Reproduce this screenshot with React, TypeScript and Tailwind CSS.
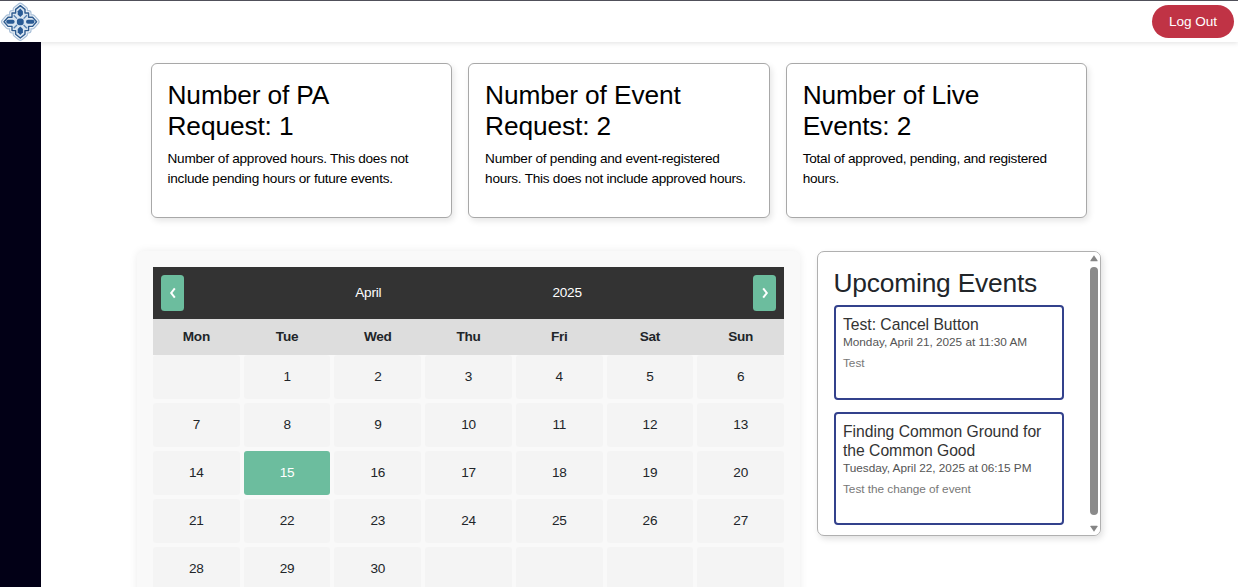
const stats = [
  {
    title: "Number of PA Request: 1",
    text: "Number of approved hours. This does not include pending hours or future events.",
  },
  {
    title: "Number of Event Request: 2",
    text: "Number of pending and event-registered hours. This does not include approved hours.",
  },
  {
    title: "Number of Live Events: 2",
    text: "Total of approved, pending, and registered hours.",
  },
];

const events = [
  {
    title: "Test: Cancel Button",
    date: "Monday, April 21, 2025 at 11:30 AM",
    text: "Test",
    height: "h-[95px]",
  },
  {
    title: "Finding Common Ground for the Common Good",
    date: "Tuesday, April 22, 2025 at 06:15 PM",
    text: "Test the change of event",
    height: "h-[113px]",
  },
];

const weekdays = ["Mon", "Tue", "Wed", "Thu", "Fri", "Sat", "Sun"];
const TODAY = 15;
const days = Array.from({ length: 35 }, (_, i) => (i >= 1 && i <= 30 ? i : null));

function Logo() {
  const outline =
    "M20.3 4.6 L25 8.4 V12 H28.6 V16.2 H32.6 L36.6 20.8 L32.6 25.4 H28.6 V29.6 H25 V33.2 L20.3 37 L15.6 33.2 V29.6 H12 V25.4 H8 L4 20.8 L8 16.2 H12 V12 H15.6 V8.4 Z";
  return (
    <svg viewBox="0 0 40 41" className="h-[41px] w-10" strokeLinejoin="round" aria-hidden="true">
      <path d={outline} fill="#a9c0d9" stroke="#a9c0d9" strokeWidth="6" />
      <path d={outline} fill="#f2f6fa" stroke="#f2f6fa" strokeWidth="3.6" />
      <path d={outline} fill="#d9e5f1" stroke="#2f5c90" strokeWidth="1.4" />
      <g fill="#2a5b95">
        <path d="M20.3 7.4 L22.9 10.2 V13.4 L20.3 16 L17.7 13.4 V10.2 Z" />
        <path d="M20.3 34 L22.9 31.2 V28 L20.3 25.4 L17.7 28 V31.2 Z" />
        <rect x="6.2" y="18.8" width="8.4" height="4" rx="2" />
        <rect x="26" y="18.8" width="8.4" height="4" rx="2" />
        <rect x="16.9" y="17.4" width="6.8" height="6.8" rx="2.6" />
      </g>
      <path
        d="M13.7 14.3 L17 17.6 M26.9 14.3 L23.6 17.6 M13.7 27.3 L17 24 M26.9 27.3 L23.6 24"
        stroke="#5580b0"
        strokeWidth="1.3"
      />
    </svg>
  );
}

function MonthButton({ label, path }: { label: string; path: string }) {
  return (
    <button
      aria-label={label}
      className="flex h-9 w-[23px] items-center justify-center rounded-[3.5px] bg-[#6cbd9e]"
    >
      <svg viewBox="0 0 8 12" className="h-3 w-2" fill="none" stroke="#fff" strokeWidth="2">
        <path d={path} />
      </svg>
    </button>
  );
}

function Calendar() {
  return (
    <section className="h-[370px] w-[663px] rounded-[7px] bg-[#f9f9f9] px-4 pt-4 shadow-[0_0_8px_rgba(0,0,0,0.08)]">
      <div className="flex h-[52px] items-center justify-between bg-[#333] px-2 text-white">
        <MonthButton label="Previous month" path="M5.8 1.3 L2.2 6 L5.8 10.7" />
        <span>April</span>
        <span>2025</span>
        <MonthButton label="Next month" path="M2.2 1.3 L5.8 6 L2.2 10.7" />
      </div>
      <div className="grid h-9 grid-cols-7 items-center gap-x-1 bg-[#ddd] text-center font-bold">
        {weekdays.map((d) => (
          <span key={d}>{d}</span>
        ))}
      </div>
      <div className="grid grid-cols-7 gap-1">
        {days.map((d, i) => (
          <div
            key={i}
            className={
              d === TODAY
                ? "flex h-11 items-center justify-center rounded-[3px] bg-[#6cbd9e] text-white"
                : "flex h-11 items-center justify-center rounded-[3px] bg-[#f4f4f4]"
            }
          >
            {d}
          </div>
        ))}
      </div>
    </section>
  );
}

function Scrollbar() {
  return (
    <div className="flex w-3 shrink-0 flex-col items-center bg-white pt-[3px] pb-[3px]">
      <svg viewBox="0 0 8 7" className="h-[7px] w-2" fill="#858585">
        <path d="M4 0.3 L7.6 5.4 Q7.8 6.3 7 6.3 H1 Q0.2 6.3 0.4 5.4 Z" />
      </svg>
      <div className="mt-[4.5px] mb-[10px] w-[7.5px] flex-1 rounded-full bg-[#8a8a8a]" />
      <svg viewBox="0 0 8 7" className="h-[7px] w-2" fill="#858585">
        <path d="M4 6.7 L7.6 1.6 Q7.8 0.7 7 0.7 H1 Q0.2 0.7 0.4 1.6 Z" />
      </svg>
    </div>
  );
}

function UpcomingEvents() {
  return (
    <section className="flex h-[285px] w-[284.5px] overflow-hidden rounded-[7px] border border-[#b0b0b0] bg-white shadow-[2px_3px_6px_rgba(0,0,0,0.12)]">
      <div className="flex-1 pt-4 pl-4">
        <h2 className="text-[26.4px] leading-[31.7px] tracking-[-0.22px]">Upcoming Events</h2>
        <div className="mt-[5.5px] flex w-[230.4px] flex-col gap-3">
          {events.map((e) => (
            <article
              key={e.title}
              className={`${e.height} rounded-[4px] border-2 border-[#33418c] px-[7.5px] pt-[8.5px]`}
            >
              <h3 className="text-[15.7px] leading-[18.8px] tracking-[-0.02px] text-[#333]">{e.title}</h3>
              <p className="-mt-[0.5px] text-[11.8px] leading-[17.2px] tracking-[-0.03px] text-[#555]">
                {e.date}
              </p>
              <p className="mt-1 text-[11.8px] leading-[17.2px] tracking-[-0.03px] text-[#777]">{e.text}</p>
            </article>
          ))}
        </div>
      </div>
      <Scrollbar />
    </section>
  );
}

export default function App() {
  return (
    <div className="flex h-[587px] w-[1238px] flex-col overflow-hidden bg-white font-['Liberation_Sans',Arial,sans-serif] text-[13.6px] leading-[19.8px] tracking-[-0.25px] text-[#212529]">
      <header className="z-10 flex h-[41.5px] shrink-0 items-center justify-between border-t border-[#50505a] bg-white pr-1 shadow-[0_1px_5px_rgba(0,0,0,0.12)]">
        <Logo />
        <button className="h-[33px] w-[82px] rounded-full bg-[#c03345] pt-px tracking-[-0.08px] text-white">
          Log Out
        </button>
      </header>
      <div className="flex min-h-0 flex-1">
        <aside className="z-20 w-[41px] shrink-0 bg-[#020016]" />
        <main className="flex-1 pt-[21.5px]">
          <div className="ml-[109.5px] flex gap-4">
            {stats.map((s) => (
              <article
                key={s.title}
                className="h-[155px] w-[301.6px] rounded-[6px] border border-[#a8a8a8] bg-white px-4 pt-4 text-black shadow-[2px_3px_6px_rgba(0,0,0,0.1)]"
              >
                <h2 className="w-[220px] text-[26.3px] leading-[31.4px] tracking-[-0.12px]">{s.title}</h2>
                <p className="mt-[6.5px]">{s.text}</p>
              </article>
            ))}
          </div>
          <div className="mt-[33px] ml-[96px] flex items-start gap-[16.5px]">
            <Calendar />
            <UpcomingEvents />
          </div>
        </main>
      </div>
    </div>
  );
}
